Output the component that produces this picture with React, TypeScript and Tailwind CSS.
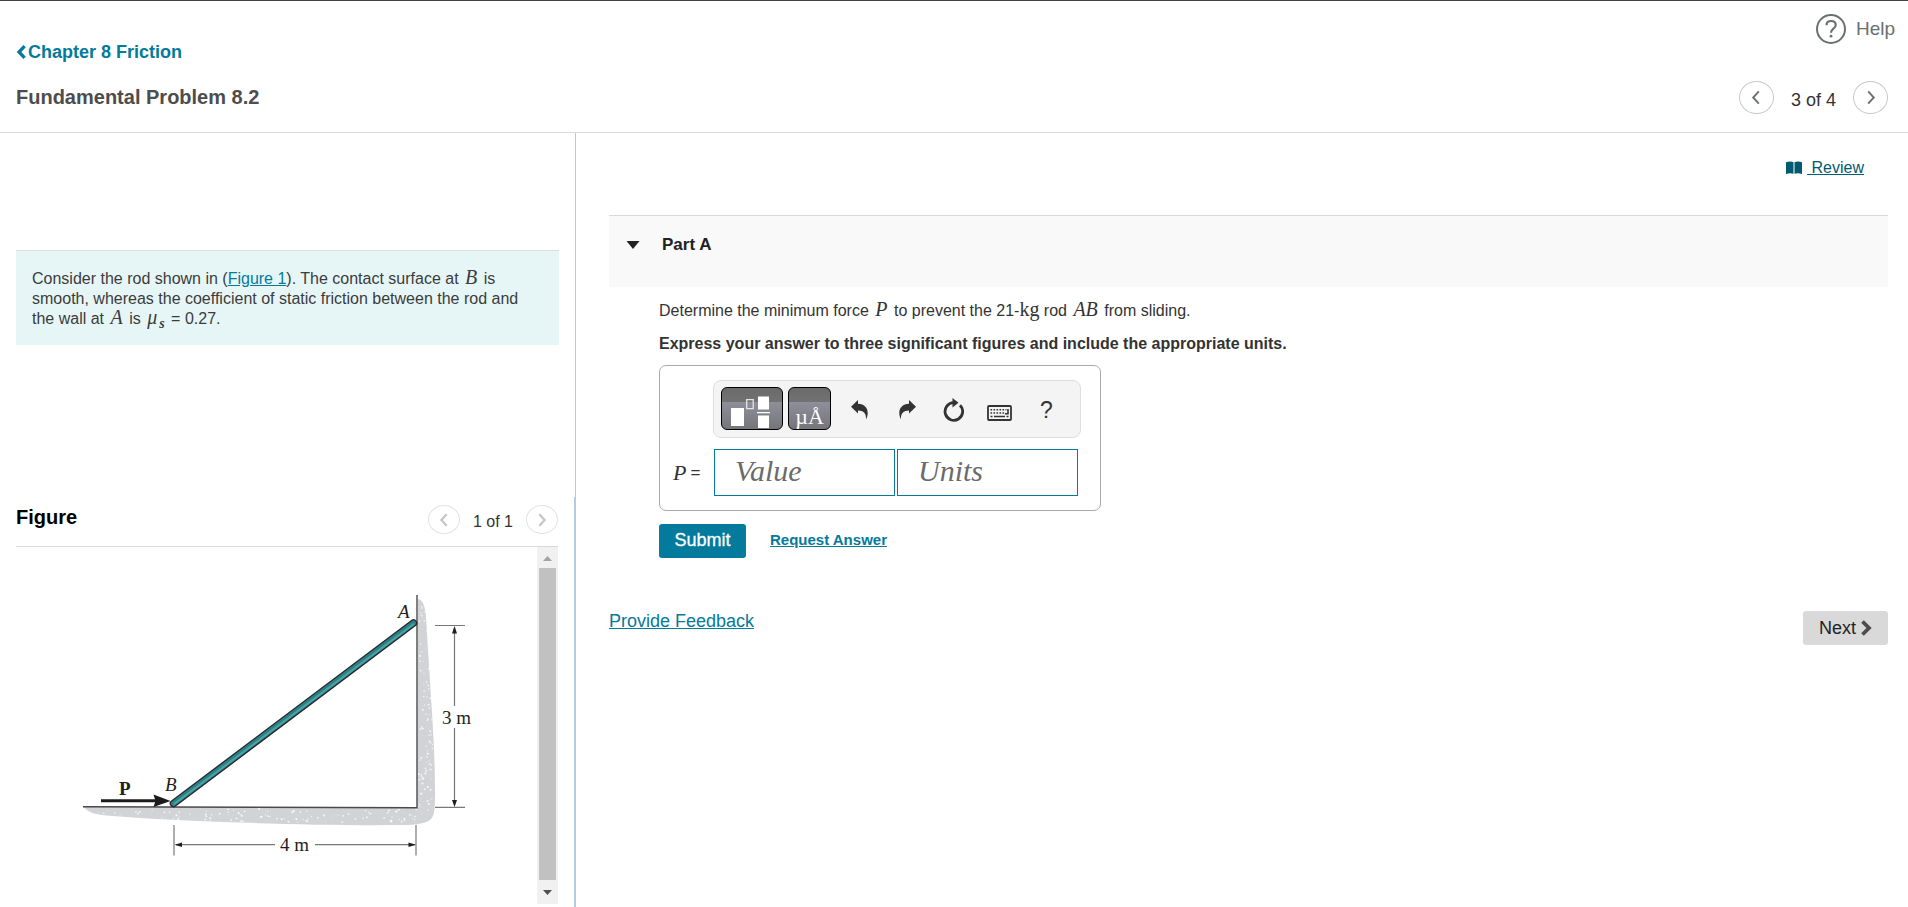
import React from "react";

function MathVar({ children }: { children: React.ReactNode }) {
  return (
    <i className="px-0.5 font-['Liberation_Serif',serif] text-[20px] leading-[0]">{children}</i>
  );
}

function Chevron({ dir, className, weight = 2 }: { dir: "left" | "right"; className: string; weight?: number }) {
  return (
    <svg viewBox="0 0 10 16" className={className} fill="none" stroke="currentColor" aria-hidden="true">
      <path d={dir === "left" ? "M8 1.5 2 8l6 6.5" : "M2 1.5 8 8l-6 6.5"} strokeWidth={weight} />
    </svg>
  );
}

function Header() {
  return (
    <header className="flex justify-between border-t border-b border-t-[#444] border-b-[#dcdcdc] pl-4 pb-[18px]">
      <div className="pt-[41px]">
        <a href="#chapter" className="flex items-center gap-0.5 text-[18px] leading-5 font-bold text-[#047a9c]">
          <svg viewBox="0 0 10 14" className="h-3.5 w-2.5" fill="none" stroke="currentColor" aria-hidden="true">
            <path d="M8.600 1.200 3 7l5.600 5.800" strokeWidth="3.300" />
          </svg>
          Chapter 8 Friction
        </a>
        <h1 className="mt-[23px] text-[20px] leading-6 font-bold text-[#4d4d4d]">Fundamental Problem 8.2</h1>
      </div>
      <div className="flex flex-col items-end">
        <button type="button" className="mt-[13px] mr-[13px] flex h-[30px] items-center gap-2.5 text-[19px] text-[#6a7070]">
          <svg viewBox="0 0 30 30" className="size-[30px]" fill="none" stroke="currentColor" aria-hidden="true">
            <circle cx="15" cy="15" r="14" strokeWidth="2" />
            <path d="M10.500 11.200c0-2.700 1.900-4.200 4.600-4.200 2.600 0 4.600 1.500 4.600 3.900 0 3.900-4.700 3.600-4.700 7.800" strokeWidth="2.200" />
            <circle cx="15" cy="22.200" r="1.400" fill="currentColor" stroke="none" />
          </svg>
          Help
        </button>
        <nav className="mt-[37px] mr-5 flex h-[33px] items-center text-[#333]" aria-label="Items">
          <button type="button" aria-label="Previous item" className="flex h-[33px] w-[35px] items-center justify-center rounded-[50%] border border-[#c7c7c7] text-[#6a7070]">
            <Chevron dir="left" className="h-[15px] w-2.5" />
          </button>
          <span className="mx-[17px] pt-1 text-[18px] leading-5">3 of 4</span>
          <button type="button" aria-label="Next item" className="flex h-[33px] w-[35px] items-center justify-center rounded-[50%] border border-[#c7c7c7] text-[#6a7070]">
            <Chevron dir="right" className="h-[15px] w-2.5" />
          </button>
        </nav>
      </div>
    </header>
  );
}

const speckles = (() => {
  let s = 7;
  const rnd = () => {
    s = (s * 16807) % 2147483647;
    return s / 2147483647;
  };
  const dots: { x: number; y: number; r: number }[] = [];
  for (let i = 0; i < 120; i++) dots.push({ x: 95 + rnd() * 335, y: 809 + rnd() * 14, r: 0.4 + rnd() * 0.7 });
  for (let i = 0; i < 110; i++) dots.push({ x: 419 + rnd() * 14, y: 602 + rnd() * 206, r: 0.4 + rnd() * 0.7 });
  return dots;
})();

const GROUND =
  "M84 807C88 813 97 815 112 816C150 819 190 821 240 822.500C300 824.500 350 825.500 400 825C418 825 427 823 431 819C435 815 435 806 435 792C435 765 433.500 735 432 713C430 680 428 650 426.500 625C426 611 424.500 600 418 599L417 807Z";

function RodFigure() {
  return (
    <svg viewBox="16 547 521 357" className="block h-[357px] w-[521px] shrink-0 font-['Liberation_Serif',serif]" role="img" aria-label="Rod AB leaning on a wall">
      <defs>
        <clipPath id="ground">
          <path d={GROUND} />
        </clipPath>
        <filter id="soft">
          <feGaussianBlur stdDeviation="0.6" />
        </filter>
      </defs>
      <path d={GROUND} fill="#d1d3d6" filter="url(#soft)" />
      <g clipPath="url(#ground)" fill="#f6f7f8">
        {speckles.map((d, i) => (
          <circle key={i} cx={d.x} cy={d.y} r={d.r} />
        ))}
      </g>
      <path d="M83 806.700 417 807.800V595" fill="none" stroke="#4a4a4c" strokeWidth="1.400" />
      <path d="M173.500 803.500 413.500 623" stroke="#26282b" strokeWidth="7.600" strokeLinecap="round" />
      <path d="M173.500 803.500 413.500 623" stroke="#2c8085" strokeWidth="5" strokeLinecap="round" />
      <path d="M174.500 803.800 413.500 624.200" stroke="#4aa3a4" strokeWidth="2" strokeLinecap="round" />
      <path d="M101 800.800H158" stroke="#1c1a1b" strokeWidth="3" />
      <path d="M153.500 794.500 170.500 801 153.500 807 155.500 801Z" fill="#1c1a1b" />
      <g stroke="#77787a" strokeWidth="1.200">
        <path d="M435 625.500H465M435 807.300H465M454.500 628V706M454.500 728V805" />
        <path d="M174 825V855.500M416 825V855.500M176 844.700H275M315 844.700H415" />
      </g>
      <g fill="#1f1f20">
        <path d="M454.500 626 457 633.500H452ZM454.500 807 457 800H452ZM174.500 844.700 182 842.500V847ZM416 844.700 408.500 842.500V847Z" />
        <text x="119" y="795" fontSize="19" fontWeight="bold">P</text>
        <text x="165" y="791" fontSize="19" fontStyle="italic">B</text>
        <text x="398" y="618" fontSize="19" fontStyle="italic">A</text>
        <text x="442" y="724" fontSize="19">3 m</text>
        <text x="280" y="851" fontSize="19">4 m</text>
      </g>
    </svg>
  );
}

function LeftPanel() {
  return (
    <aside className="flex w-[576px] shrink-0 flex-col">
      <div className="h-[364px] border-r border-[#b5cbe5] pt-[117px] pr-4 pl-4">
        <div className="border-t border-[#d9dfdf] bg-[#e6f6f7] px-4 pt-[18px] pb-4 text-[16px] leading-5 text-[#3c3c3c]">
          Consider the rod shown in (
          <a href="#figure" className="text-[#047a9c] underline">Figure 1</a>
          ). The contact surface at <MathVar>B</MathVar> is smooth, whereas the coefficient of static friction
          between the rod and the wall at <MathVar>A</MathVar> is <MathVar>μ</MathVar>
          <sub className="pr-0.5 font-['Liberation_Serif',serif] text-[14px] leading-[0] font-bold italic">s</sub>
          &nbsp;= 0.27.
        </div>
      </div>
      <section id="figure" className="flex grow flex-col border-r-2 border-[#b5cbe5] pr-4 pb-[3px] pl-4">
        <div className="flex h-[50px] items-start justify-between border-b border-[#d9d9d9]">
          <h2 className="mt-2 text-[20px] leading-6 font-bold text-black">Figure</h2>
          <nav className="mt-2 flex items-center text-[#333]" aria-label="Figures">
            <button type="button" aria-label="Previous figure" className="flex h-[29px] w-8 items-center justify-center rounded-[50%] border border-[#e3e3e3] text-[#c4c4c4]">
              <Chevron dir="left" className="h-3.5 w-2.5" weight={2.5} />
            </button>
            <span className="mx-[13px] pt-1 text-[16px] leading-5">1 of 1</span>
            <button type="button" aria-label="Next figure" className="flex h-[29px] w-8 items-center justify-center rounded-[50%] border border-[#e3e3e3] text-[#c4c4c4]">
              <Chevron dir="right" className="h-3.5 w-2.5" weight={2.5} />
            </button>
          </nav>
        </div>
        <div className="flex grow">
          <RodFigure />
          <div className="flex w-[21px] flex-col items-center bg-[#f1f1f1]" aria-hidden="true">
            <svg viewBox="0 0 21 21" className="h-[21px] w-[21px]"><path d="M6 14h9l-4.500-5z" fill="#a3a3a3" /></svg>
            <div className="w-[17px] grow bg-[#c1c1c1]" />
            <svg viewBox="0 0 21 24" className="h-6 w-[21px]"><path d="M6 10h9l-4.500 5z" fill="#505050" /></svg>
          </div>
        </div>
      </section>
    </aside>
  );
}

function Toolbar() {
  return (
    <div role="toolbar" aria-label="Equation tools" className="flex h-[58px] w-[368px] items-center rounded-[8px] border border-[#dedede] bg-[#f4f4f4] pb-0.5 pl-[7px] text-[#333]">
      <button type="button" aria-label="Templates" className="h-[43px] w-[62px] rounded-[6px] border border-black bg-[linear-gradient(#6a6a6a_0,#727272_33%,#8f8f9b_34%,#75757a_100%)]">
        <svg viewBox="0 0 60 41" className="block h-[41px] w-[60px]" aria-hidden="true">
          <path d="M9 20h13v18H9zM36 8.500h11v13H36zM36 27.500h11V40H36zM35 24h13v1.300H35z" fill="#fff" />
          <path d="M24.700 11.700h6.500v9h-6.500z" fill="none" stroke="#e4e4e8" strokeWidth="1.300" />
        </svg>
      </button>
      <button type="button" aria-label="Units and symbols" className="ml-[5px] flex h-[43px] w-[43px] items-end justify-center overflow-hidden rounded-[6px] border border-black bg-[linear-gradient(#6a6a6a_0,#727272_33%,#8f8f9b_34%,#75757a_100%)] font-['Liberation_Serif',serif] text-[22px] leading-6 text-white">
        µÅ
      </button>
      <button type="button" aria-label="Undo" className="mt-1 ml-5">
        <svg viewBox="0 0 17 20" className="block h-5 w-[17px]" fill="currentColor"><path d="M0 6.700 7 0v3.700C13 4 16.800 7.500 16.700 13c0 2.500-.7 4.700-1.700 6.300.5-5.600-2.500-8.600-8-8.700v3z" /></svg>
      </button>
      <button type="button" aria-label="Redo" className="mt-1 ml-[31px]">
        <svg viewBox="0 0 17 20" className="block h-5 w-[17px]" fill="currentColor"><path d="M17 6.700 10 0v3.700C4 4 .2 7.500.3 13c0 2.500.7 4.700 1.700 6.300-.5-5.600 2.500-8.600 8-8.700v3z" /></svg>
      </button>
      <button type="button" aria-label="Reset" className="mt-1 ml-[26px]">
        <svg viewBox="0 0 22 24" className="block h-6 w-[22px]" aria-hidden="true">
          <path d="M18 7.200A8.800 8.800 0 1 1 11.500 4.700" fill="none" stroke="currentColor" strokeWidth="2.800" />
          <path d="M10.500 0 16.500 4.700 10.500 9.500z" fill="currentColor" />
        </svg>
      </button>
      <button type="button" aria-label="Keyboard" className="mt-[10px] ml-[23px]">
        <svg viewBox="0 0 25 16" className="block h-4 w-[25px]" aria-hidden="true">
          <rect x="1" y="1" width="23" height="14" rx="1" fill="none" stroke="currentColor" strokeWidth="1.800" />
          <path d="M3.500 4.800h16M3.500 8h14" stroke="currentColor" strokeWidth="1.600" strokeDasharray="1.600 1.400" />
          <path d="M3.500 11.500h2M7 11.500h11M19.500 11.500h2M21 4v4.800h-3" stroke="currentColor" strokeWidth="1.600" fill="none" />
        </svg>
      </button>
      <button type="button" aria-label="Help" className="mt-1 ml-[28px] text-[23px] leading-6">?</button>
    </div>
  );
}

function AnswerForm() {
  const field =
    "h-[47px] w-[181px] border border-[#047a9c] bg-white px-5 pb-1 font-['Liberation_Serif',serif] text-[30px] italic text-[#333] placeholder:text-[#6b6b6b] placeholder:opacity-100";
  return (
    <form onSubmit={(e) => e.preventDefault()}>
      <div className="mt-[11px] w-[442px] rounded-[7px] border border-[#a9a9a9] pt-3.5 pb-3.5 pl-[13px]">
        <div className="ml-10">
          <Toolbar />
        </div>
        <div className="mt-[11px] flex items-center">
          <label htmlFor="value" className="flex w-[41px] items-center gap-1 text-[17px] leading-6 text-[#333]">
            <i className="font-['Liberation_Serif',serif] text-[22px]">P</i>
            <span>=</span>
          </label>
          <input id="value" type="text" placeholder="Value" className={field} />
          <input type="text" aria-label="Units" placeholder="Units" className={`ml-0.5 ${field}`} />
        </div>
      </div>
      <div className="mt-[13px] flex items-center">
        <button type="submit" className="h-[34px] w-[87px] rounded-[3px] bg-[#047a9c] pb-0.5 text-[18px] leading-5 text-white [-webkit-text-stroke:0.3px_#fff]">Submit</button>
        <a href="#answer" className="ml-6 pb-0.5 text-[15px] leading-5 font-bold text-[#047a9c] underline">Request Answer</a>
      </div>
    </form>
  );
}

function MainPanel() {
  return (
    <main className="min-w-0 grow pt-[25px] pr-5 pl-[33px]">
      <div className="mr-6 flex justify-end">
        <a href="#review" className="flex items-center gap-[5px] text-[16px] leading-5 text-[#005a70]">
          <svg viewBox="0 0 16 14" className="h-3.5 w-4" fill="currentColor" aria-hidden="true">
            <path d="M0 1.200C2.500.3 5.500.3 7.500 1.200V12.800C5.500 12 2.500 12 0 13zM8.500 1.200C10.500.3 13.500.3 16 1.200V13c-2.500-1-5.500-1-7.500-.2z" />
          </svg>
          <span className="whitespace-pre underline"> Review</span>
        </a>
      </div>
      <section>
        <div className="mt-[37px] h-[72px] border-t border-[#d9d9d9] bg-[#f9f9f9] pt-[19px] pl-[17px]">
          <button type="button" className="flex items-center gap-[22px] text-[17px] leading-5 font-bold text-[#222]">
            <svg viewBox="0 0 14 8" className="h-2 w-3.5" fill="currentColor" aria-hidden="true"><path d="M.5 0h13L7 8z" /></svg>
            Part A
          </button>
        </div>
        <div className="pl-[50px] text-[#333]">
          <p className="mt-3.5 text-[16px] leading-5">
            Determine the minimum force <MathVar>P</MathVar> to prevent the 21-
            <span className="font-['Liberation_Serif',serif] text-[20px] leading-[0]">kg</span> rod{" "}
            <MathVar>AB</MathVar> from sliding.
          </p>
          <p className="mt-[13px] text-[16px] leading-5 font-bold">
            Express your answer to three significant figures and include the appropriate units.
          </p>
          <AnswerForm />
        </div>
      </section>
      <footer className="mt-[53px] flex items-start justify-between">
        <a href="#feedback" className="text-[18px] leading-5 text-[#047a9c] underline">Provide Feedback</a>
        <button type="button" className="flex h-[34px] w-[85px] items-center justify-center gap-1 rounded-[3px] bg-[#d9d9d9] text-[18px] leading-5 text-[#222]">
          Next
          <svg viewBox="0 0 12 16" className="h-4 w-3 text-[#4d4d4d]" fill="none" stroke="currentColor" aria-hidden="true">
            <path d="M2.500 1.500 9 8l-6.500 6.500" strokeWidth="3.800" />
          </svg>
        </button>
      </footer>
    </main>
  );
}

export default function App() {
  return (
    <div className="flex min-h-screen flex-col bg-white font-['Liberation_Sans',Arial,sans-serif]">
      <Header />
      <div className="flex grow">
        <LeftPanel />
        <MainPanel />
      </div>
    </div>
  );
}
